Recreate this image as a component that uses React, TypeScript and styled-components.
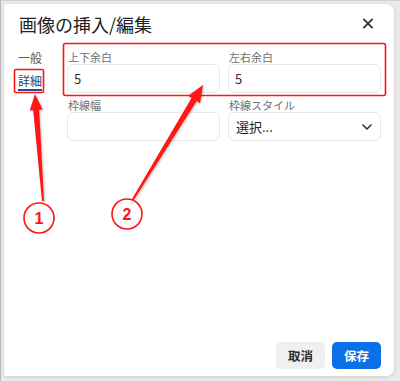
import styled, { createGlobalStyle } from 'styled-components';

const GlobalStyle = createGlobalStyle`
    html, body {
        margin: 0;
        padding: 0;
        background: #ebebeb;
    }
    * {
        box-sizing: border-box;
    }
`;

const FONT = `"Noto Sans CJK JP", "Noto Sans", "Liberation Sans", sans-serif`;

const Frame = styled.div`
    position: relative;
    width: 400px;
    height: 381px;
    padding: 3px 7px 6px 3px;
    background: #eaeaea;
    border-left: 1px solid #b8b8b8;
    border-top: 1px solid #d0d0d0;
    font-family: ${FONT};
    overflow: hidden;
`;

const Dialog = styled.div`
    width: 390px;
    height: 372px;
    display: flex;
    flex-direction: column;
    background: #ffffff;
    border-radius: 2px 8px 8px 2px;
    box-shadow: 0 1px 4px rgba(0, 0, 0, 0.12);
`;

const Header = styled.div`
    height: 39px;
    display: flex;
    align-items: center;
    justify-content: space-between;
    padding: 0 21px 0 15px;
`;

const Title = styled.h1`
    margin: 0;
    font-size: 18px;
    font-weight: 400;
    color: #222222;
    line-height: 24px;
`;

const CloseButton = styled.button`
    border: 0;
    background: none;
    padding: 0;
    width: 10px;
    height: 10px;
    display: flex;
    align-items: center;
    justify-content: center;
    color: #2b2f36;
`;

const Body = styled.div`
    display: flex;
    padding: 0 0 0 14px;
`;

const Nav = styled.nav`
    width: 49px;
    display: flex;
    flex-direction: column;
    align-items: flex-start;
    gap: 5px;
    padding-top: 7px;
`;

const NavItem = styled.span<{ active?: boolean }>`
    font-size: 12px;
    line-height: 16px;
    color: ${({ active }) => (active ? '#1e3f6e' : '#5a5f66')};
    border-bottom: 2px solid ${({ active }) => (active ? '#1e4f8f' : 'transparent')};
`;

const Form = styled.div`
    display: grid;
    grid-template-columns: 153px 153px;
    column-gap: 8px;
    row-gap: 5px;
    padding-top: 7px;
`;

const Field = styled.label`
    display: flex;
    flex-direction: column;
`;

const Label = styled.span`
    font-size: 11px;
    line-height: 14px;
    color: #6a6f76;
    padding-left: 1px;
`;

const Input = styled.input`
    width: 153px;
    height: 29px;
    border: 1px solid #e6e7e9;
    border-radius: 6px;
    padding: 0 6px;
    font-family: ${FONT};
    font-size: 13px;
    color: #2a2d31;
    background: #ffffff;
    outline: none;
`;

const Select = styled.div`
    width: 153px;
    height: 29px;
    border: 1px solid #e6e7e9;
    border-radius: 6px;
    padding: 0 8px 0 7px;
    display: flex;
    align-items: center;
    justify-content: space-between;
    font-size: 13px;
    color: #222222;
`;

const Footer = styled.div`
    margin-top: auto;
    display: flex;
    justify-content: flex-end;
    gap: 7px;
    padding: 0 13px 7px 0;
`;

const Button = styled.button<{ primary?: boolean }>`
    width: 49px;
    height: 27px;
    border: 0;
    border-radius: 5px;
    font-family: ${FONT};
    font-size: 12.5px;
    font-weight: 700;
    color: ${({ primary }) => (primary ? '#ffffff' : '#2b2d31')};
    background: ${({ primary }) => (primary ? '#0b6fe8' : '#f0f0f0')};
`;

const Overlay = styled.svg`
    position: absolute;
    top: 0;
    left: 0;
    pointer-events: none;
`;

type Pt = [number, number];

// tapered callout arrow from tail to tip
const arrowPoints = (tail: Pt, tip: Pt, headLen: number, headW: number, neckW: number, tailW: number) => {
    const dx = tip[0] - tail[0];
    const dy = tip[1] - tail[1];
    const len = Math.hypot(dx, dy);
    const ux = dx / len;
    const uy = dy / len;
    const nx = -uy;
    const ny = ux;
    const bx = tip[0] - ux * headLen;
    const by = tip[1] - uy * headLen;
    const pts: Pt[] = [
        [tail[0] + (nx * tailW) / 2, tail[1] + (ny * tailW) / 2],
        [bx + (nx * neckW) / 2, by + (ny * neckW) / 2],
        [bx + (nx * headW) / 2, by + (ny * headW) / 2],
        tip,
        [bx - (nx * headW) / 2, by - (ny * headW) / 2],
        [bx - (nx * neckW) / 2, by - (ny * neckW) / 2],
        [tail[0] - (nx * tailW) / 2, tail[1] - (ny * tailW) / 2],
    ];
    return pts.map((p) => p.join(',')).join(' ');
};

const RED = '#ff1414';

const Annotations = () => (
    <Overlay width="400" height="381" viewBox="0 0 400 381">
        <defs>
            <filter id="sh" x="-20%" y="-20%" width="140%" height="140%">
                <feDropShadow dx="1" dy="1" stdDeviation="0.8" floodColor="#000" floodOpacity="0.25" />
            </filter>
        </defs>
        <rect x="13.5" y="68.5" width="29" height="23" rx="1.5" fill="none" stroke={RED} strokeWidth="1.6" />
        <rect x="62.5" y="42.5" width="322" height="52" rx="2" fill="none" stroke={RED} strokeWidth="1.6" />
        <g filter="url(#sh)">
            <polygon points={arrowPoints([42, 200], [34, 93], 16, 13, 6, 2)} fill={RED} />
            <polygon points={arrowPoints([131, 200], [202, 84], 17, 14, 6, 2)} fill={RED} />
        </g>
        <circle cx="38" cy="217" r="15" fill="#fff" stroke={RED} strokeWidth="1.6" />
        <circle cx="126" cy="213" r="15" fill="#fff" stroke={RED} strokeWidth="1.6" />
        <text x="38" y="223" textAnchor="middle" fontSize="16" fontWeight="700" fill={RED} fontFamily="Liberation Sans, sans-serif">1</text>
        <text x="126" y="219" textAnchor="middle" fontSize="16" fontWeight="700" fill={RED} fontFamily="Liberation Sans, sans-serif">2</text>
    </Overlay>
);

const App = () => {
    return (
        <>
            <GlobalStyle />
            <Frame>
                <Dialog>
                    <Header>
                        <Title>画像の挿入/編集</Title>
                        <CloseButton aria-label="閉じる">
                            <svg width="11" height="11" viewBox="0 0 11 11">
                                <path d="M1 1 L10 10 M10 1 L1 10" stroke="currentColor" strokeWidth="2" strokeLinecap="round" />
                            </svg>
                        </CloseButton>
                    </Header>
                    <Body>
                        <Nav>
                            <NavItem>一般</NavItem>
                            <NavItem active>詳細</NavItem>
                        </Nav>
                        <Form>
                            <Field>
                                <Label>上下余白</Label>
                                <Input defaultValue="5" />
                            </Field>
                            <Field>
                                <Label>左右余白</Label>
                                <Input defaultValue="5" />
                            </Field>
                            <Field>
                                <Label>枠線幅</Label>
                                <Input defaultValue="" />
                            </Field>
                            <Field>
                                <Label>枠線スタイル</Label>
                                <Select>
                                    <span>選択...</span>
                                    <svg width="10" height="6" viewBox="0 0 10 6">
                                        <path d="M1 1 L5 5 L9 1" fill="none" stroke="#2b2f36" strokeWidth="1.6" strokeLinecap="round" strokeLinejoin="round" />
                                    </svg>
                                </Select>
                            </Field>
                        </Form>
                    </Body>
                    <Footer>
                        <Button>取消</Button>
                        <Button primary>保存</Button>
                    </Footer>
                </Dialog>
                <Annotations />
            </Frame>
        </>
    );
};

export default App;
